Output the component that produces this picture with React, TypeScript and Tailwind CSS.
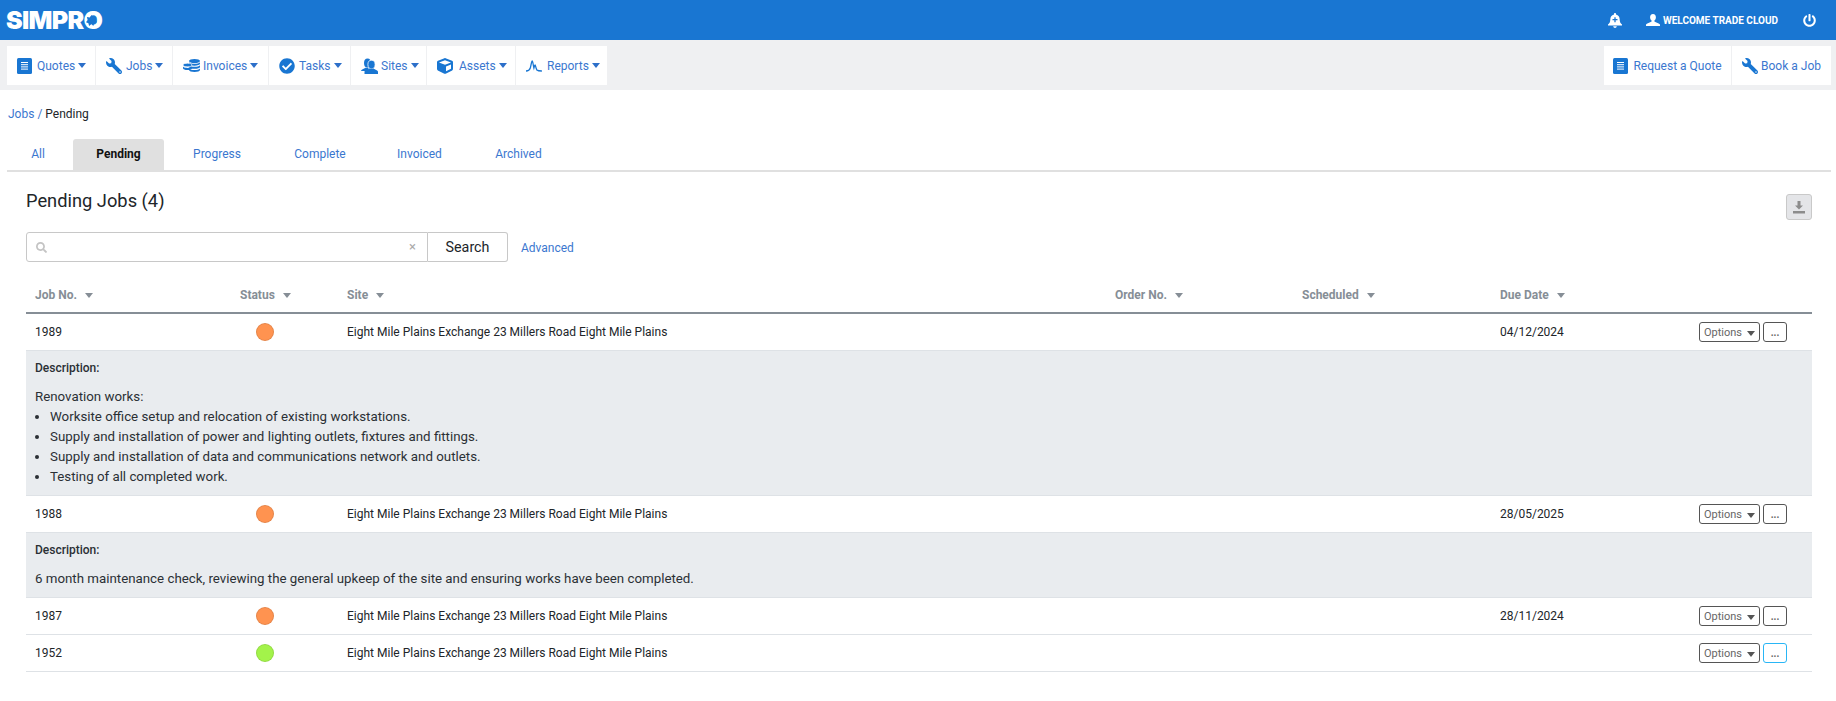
import React from "react";
import { FaPowerOff, FaWrench, FaCheckCircle, FaCube, FaSearch } from "react-icons/fa";

const Doc = () => (
  <svg width="15" height="16" viewBox="0 0 15 16" className="shrink-0">
    <rect x="0" y="0" width="15" height="16" rx="1.500" fill="#1976d2" />
    <path d="M4 4.500h7M4 6.700h7M4 8.900h7M4 11.100h7" stroke="#fff" strokeWidth="1" />
  </svg>
);
const Wave = () => (
  <svg width="16" height="12" viewBox="0 0 16 12" className="shrink-0">
    <path d="M0 11c2.500 0 3.500-.5 4.300-3S5.500 1 6.200 1s.9 4 1.700 7c.4-1.500.8-3 1.200-3s.7 3.500 1.800 5c.8.8 2.500 1 5 1" fill="none" stroke="#1976d2" strokeWidth="1.300" />
  </svg>
);
const Coins = () => (
  <svg width="17" height="14" viewBox="0 0 17 14" className="shrink-0">
    <g fill="#1976d2">
      <ellipse cx="11.500" cy="2" rx="5.500" ry="2" />
      <path d="M6 3.200c1 1 3 1.500 5.500 1.500S16 4.200 17 3.200v1.600c0 1-2.500 1.900-5.500 1.900S6 5.800 6 4.800z" />
      <path d="M6 6.300c1 1 3 1.500 5.500 1.500S16 7.300 17 6.300v1.600c0 1-2.500 1.900-5.500 1.900S6 8.900 6 7.900z" />
      <path d="M6 9.400c1 1 3 1.500 5.500 1.500S16 10.400 17 9.400V11c0 1-2.500 2-5.500 2S6 12 6 11z" />
      <ellipse cx="4.500" cy="6" rx="4.500" ry="1.800" stroke="#fff" strokeWidth="0.600" />
      <path d="M0 7.700c1 .8 2.500 1.200 4.500 1.200S8 8.500 9 7.700v1.500c0 1-2 1.800-4.500 1.800S0 10.200 0 9.200z" />
    </g>
  </svg>
);
const Sites = () => (
  <svg width="17" height="16" viewBox="0 0 17 16" className="shrink-0">
    <g fill="#1976d2">
      <ellipse cx="6.500" cy="5" rx="3.500" ry="4.500" />
      <path d="M0 13c0-1.500 3-2.500 4.500-3.300h3V13z" />
      <ellipse cx="10.500" cy="6.500" rx="3.600" ry="4.300" stroke="#fff" strokeWidth="0.800" />
      <path d="M3.500 16v-2.200c0-1.500 3.500-2 4.800-3.300h4.400c1.300 1.300 4.300 1.800 4.300 3.300V16z" />
    </g>
  </svg>
);
const User = () => (
  <svg width="14" height="12" viewBox="0 0 14 12" className="mr-[3px]">
    <path d="M7 0C5 0 4.100 1.400 4.100 3.200c0 1.500.6 2.600 1.500 3.300v.9C4 8.500.6 9 0 10.500V12h14v-1.500C13.400 9 10 8.500 8.400 7.400v-.9c.9-.7 1.500-1.800 1.500-3.300C9.900 1.400 9 0 7 0z" fill="#fff" />
  </svg>
);
const Bell = () => (
  <svg width="14" height="15" viewBox="0 0 14 15" className="mr-[24px]">
    <path d="M7 0c.6 0 1 .4 1 1v.4c2.400.5 3.700 2.500 3.700 5 0 2.400.7 3.700 2.300 5.100V12.500H0v-1c1.600-1.400 2.300-2.700 2.300-5.100 0-2.500 1.300-4.500 3.700-5V1c0-.6.400-1 1-1z" fill="#fff" />
    <path d="M5.200 13.300h3.600C8.600 14.300 7.900 15 7 15s-1.600-.7-1.800-1.700z" fill="#fff" />
    <path d="M7 4.200v5M4.500 6.700h5" stroke="#1976d2" strokeWidth="1.300" />
  </svg>
);
const Download = () => (
  <svg width="14" height="13" viewBox="0 0 14 13">
    <path d="M5.500 0h3v4.500H11L7 8.500 3 4.500h2.500z" fill="#8c8c8c" />
    <rect x="1" y="10" width="12" height="2.500" fill="#8c8c8c" />
  </svg>
);
const iconCls = "text-[#1976d2] shrink-0";
const navLeft: [string, React.ReactNode, string, string][] = [
  ["Quotes", <Doc />, "w-[88px]", "w-[17px]"],
  ["Jobs", <FaWrench size={16} className={`${iconCls} -scale-x-100`} />, "w-[76px]", "w-[17px]"],
  ["Invoices", <Coins />, "w-[95px]", "w-[17px]"],
  ["Tasks", <FaCheckCircle size={16} className={iconCls} />, "w-[81px]", "w-[17px]"],
  ["Sites", <Sites />, "w-[75px]", "w-[17px]"],
  ["Assets", <FaCube size={16} className={iconCls} />, "w-[88px]", "w-[19px]"],
  ["Reports", <Wave />, "w-[91px]", "w-[18px]"],
];

const Arrow = ({ c = "border-t-[#2c6fc9]" }: { c?: string }) => (
  <span className={`inline-block w-0 h-0 border-x-[4px] border-x-transparent border-t-[5px] ${c}`} />
);

const Row = ({ no, color, due, active }: { no: string; color: string; due: string; active?: boolean }) => (
  <div className="flex items-center h-[37px] border-b border-[#dee2e6] text-[12px] text-[#212529]">
    <div className="w-[214px] pl-[9px]">{no}</div>
    <div className="w-[107px] pl-[16px]">
      <div className={`w-[18px] h-[18px] rounded-full ${color} border border-black/10`} />
    </div>
    <div className="w-[768px]">Eight Mile Plains Exchange 23 Millers Road Eight Mile Plains</div>
    <div className="w-[187px]" />
    <div className="w-[198px]" />
    <div className="flex-1">{due}</div>
    <div className="flex items-center gap-[3px] mr-[25px]">
      <button className="w-[61px] h-[20px] border border-[#555] rounded-[3px] flex items-center justify-center gap-[5px] text-[11px] text-[#666] pt-[2px]">
        Options <Arrow c="border-t-[#555]" />
      </button>
      <button className={`w-[24px] h-[20px] border rounded-[3px] text-[10px] font-bold leading-[20px] text-[#666] ${active ? "border-[#29b6f6]" : "border-[#555]"}`}>...</button>
    </div>
  </div>
);

const Head = ({ w, label, extra = "" }: { w: string; label: string; extra?: string }) => (
  <div className={`${w} ${extra} flex items-center gap-[8px]`}>
    {label} <Arrow c="border-t-[#868e96]" />
  </div>
);

export default function App() {
  return (
    <div className="w-[1836px] h-[701px] bg-white overflow-hidden font-['Roboto',sans-serif] text-[12px] text-[#212529]">
      <header className="h-[40px] bg-[#1976d2] flex items-center justify-between text-white">
        <div className="relative ml-[6px] font-['Inter',sans-serif] font-black text-[25px] tracking-[-0.7px] leading-none">
          SIMPRO
          <svg width="11" height="11" viewBox="0 0 10 10" className="absolute right-[5.500px] top-[7px]">
            <path d="M5 0l1.500 2.200 2.800-.3-.6 2.600L10 6.500 7.500 7.400 6.600 10 5 8.200 2.800 10l-.6-2.600L0 6.500l1.500-2L.8 1.900l2.700.3z" fill="#1976d2" />
          </svg>
        </div>
        <div className="flex items-center">
          <Bell />
          <User />
          <span className="text-[10px] font-bold mr-[25px] mt-[1px]">WELCOME TRADE CLOUD</span>
          <FaPowerOff size={13} className="mr-[20px]" />
        </div>
      </header>

      <nav className="h-[50px] bg-[#eff0f2] pt-[6px] pl-[7px] pr-[6px] flex justify-between">
        <div className="flex h-[39px] gap-[1px]">
          {navLeft.map(([label, icon, w, box]) => (
            <div key={label} className={`${w} bg-white flex items-center pl-[10px] gap-[3px] text-[12px]`}>
              <span className={`${box} flex items-center shrink-0`}>{icon}</span>
              <span className="text-[#3b77cf]">{label}</span>
              <Arrow />
            </div>
          ))}
        </div>
        <div className="flex h-[39px] gap-[1px] mr-[-1px]">
          <div className="w-[127px] bg-white flex items-center justify-center gap-[5px] text-[#3b77cf]">
            <Doc /> Request a Quote
          </div>
          <div className="w-[99px] bg-white flex items-center justify-center gap-[3px] text-[#3b77cf]">
            <FaWrench size={16} className={`${iconCls} -scale-x-100`} /> Book a Job
          </div>
        </div>
      </nav>

      <div className="pl-[7px] pr-[5px]">
        <div className="h-[49px] flex items-center pl-[1px] pb-[1px]">
          <span className="text-[#3b77cf]">Jobs</span>
          <span className="text-[#3b77cf]">&nbsp;/&nbsp;</span>
          <span>Pending</span>
        </div>
        <div className="flex h-[33px] border-b-2 border-[#e0e0e0] text-[#3b77cf] text-[12px] ">
          <div className="w-[62px] mr-[4px] flex items-center justify-center pb-[1px]">All</div>
          <div className="w-[91px] flex items-center justify-center rounded-t-[3px] bg-[#e0e0e0] font-bold text-[#111] pb-[1px]">Pending</div>
          <div className="w-[106px] flex items-center justify-center pb-[1px]">Progress</div>
          <div className="w-[100px] flex items-center justify-center pb-[1px]">Complete</div>
          <div className="w-[99px] flex items-center justify-center pb-[1px]">Invoiced</div>
          <div className="w-[99px] flex items-center justify-center pb-[1px]">Archived</div>
        </div>
      </div>

      <div className="pl-[26px] pr-[24px]">
        <div className="relative flex items-center h-[59px] pb-[2px]">
          <h1 className="text-[18.300px] font-normal text-[#212529]">Pending Jobs (4)</h1>
          <button className="absolute right-0 top-[22px] w-[26px] h-[26px] bg-[#e4e5e8] border border-[#c9c9c9] rounded-[3px] flex items-center justify-center">
            <Download />
          </button>
        </div>
        <div className="flex items-center h-[30px] mt-[1px]">
          <div className="w-[402px] h-[30px] border border-[#c8c8c8] rounded-l-[3px] flex items-center justify-between pl-[9px] pr-[11px] text-[#c4c4c4]">
            <FaSearch size={11} />
            <span className="text-[13px] text-[#aaa]">×</span>
          </div>
          <div className="w-[80px] h-[30px] border border-l-0 border-[#c8c8c8] rounded-r-[3px] flex items-center justify-center pt-[1px] text-[14.300px] text-[#212529]">Search</div>
          <span className="ml-[13px] mt-[1px] text-[#3b77cf] text-[12px]">Advanced</span>
        </div>

        <div className="flex items-center h-[35px] mt-[17px] border-b-2 border-[#868e96] text-[12px] font-bold text-[#868e96] pb-[1px]">
          <Head w="w-[214px]" label="Job No." extra="pl-[9px]" />
          <Head w="w-[107px]" label="Status" />
          <Head w="w-[768px]" label="Site" />
          <Head w="w-[187px]" label="Order No." />
          <Head w="w-[198px]" label="Scheduled" />
          <Head w="w-[160px]" label="Due Date" />
        </div>

        <Row no="1989" color="bg-[#ff9350]" due="04/12/2024" />
        <div className="h-[145px] bg-[#e9ecef] border-b border-[#dee2e6] pl-[9px] pt-[7px] text-[13.300px] leading-[20px] text-[#2b3035]">
          <div className="text-[12px] font-medium">Description:</div>
          <div className="mt-[9px]">Renovation works:</div>
          <ul className="list-disc pl-[15px]">
            <li>Worksite office setup and relocation of existing workstations.</li>
            <li>Supply and installation of power and lighting outlets, fixtures and fittings.</li>
            <li>Supply and installation of data and communications network and outlets.</li>
            <li>Testing of all completed work.</li>
          </ul>
        </div>
        <Row no="1988" color="bg-[#ff9350]" due="28/05/2025" />
        <div className="h-[65px] bg-[#e9ecef] border-b border-[#dee2e6] pl-[9px] pt-[7px] text-[13.300px] leading-[20px] text-[#2b3035]">
          <div className="text-[12px] font-medium">Description:</div>
          <div className="mt-[9px]">6 month maintenance check, reviewing the general upkeep of the site and ensuring works have been completed.</div>
        </div>
        <Row no="1987" color="bg-[#ff9350]" due="28/11/2024" />
        <Row no="1952" color="bg-[#a3f34a]" due="" active />
      </div>
    </div>
  );
}
